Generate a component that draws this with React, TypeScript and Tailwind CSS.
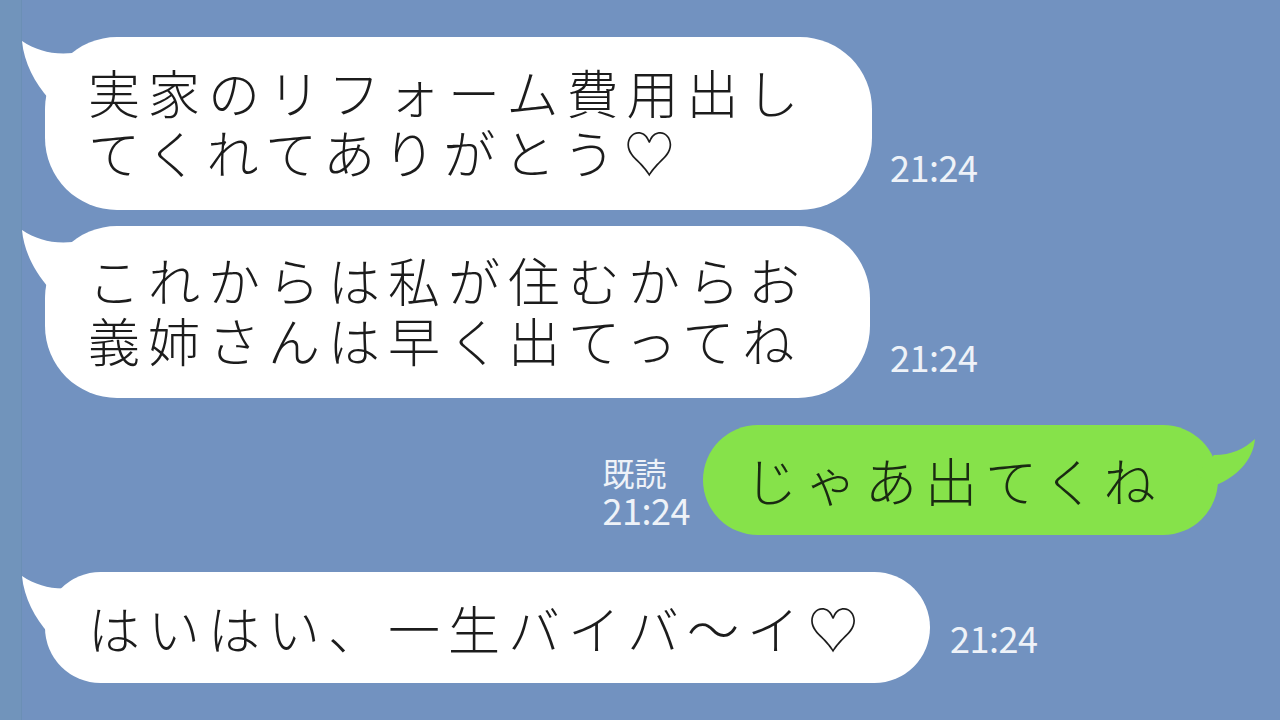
import React from 'react';

const jp = { fontFamily: '"Noto Sans CJK JP", "Noto Sans", sans-serif' };

function LeftTail() {
  return (
    <svg className="absolute left-[-24px] top-0" width="90" height="100" viewBox="0 0 90 100">
      <path d="M1 4 C 16 14, 32 18, 52 16 L 70 60 L 28 62 C 14 46, 3 26, 1 4 Z" fill="#ffffff" />
    </svg>
  );
}

function RightTail() {
  return (
    <svg className="absolute right-[-38px] top-0" width="100" height="100" viewBox="0 0 100 100">
      <path d="M99 14 C 88 24, 76 30, 58 30 L 40 50 L 60 60 C 80 52, 97 36, 99 14 Z" fill="#86e24a" />
    </svg>
  );
}

function Time({ children }: { children: React.ReactNode }) {
  return <div className="text-[36px] leading-[36px] text-[#eef2f8] tracking-[-0.5px]">{children}</div>;
}

export default function App() {
  return (
    <div className="w-[1280px] h-[720px] overflow-hidden bg-[#7292c0] flex" style={jp}>
      <div className="w-[22px] shrink-0 bg-[#7194bb] border-r border-[#6b8fb5]" />
      <div className="flex-1 flex flex-col pt-[37px]">
        {/* message 1 */}
        <div className="flex items-end">
          <div className="relative ml-[23px] w-[827px] h-[173px] rounded-[72px] bg-white flex items-center pl-[43px] pb-[4px]">
            <LeftTail />
            <div className="relative text-[52px] leading-[60px] tracking-[8px] text-[#1c1c1c] font-light">
              実家のリフォーム費用出し<br />てくれてありがとう♡
            </div>
          </div>
          <div className="ml-[18px] mb-[26px]"><Time>21:24</Time></div>
        </div>
        {/* message 2 */}
        <div className="flex items-end mt-[16px]">
          <div className="relative ml-[23px] w-[825px] h-[172px] rounded-[72px] bg-white flex items-center pl-[43px] pb-[4px]">
            <LeftTail />
            <div className="relative text-[52px] leading-[60px] tracking-[8px] text-[#1c1c1c] font-light">
              これからは私が住むからお<br />義姉さんは早く出てってね
            </div>
          </div>
          <div className="ml-[20px] mb-[24px]"><Time>21:24</Time></div>
        </div>
        {/* my reply */}
        <div className="flex items-end justify-end mt-[27px] pr-[62px]">
          <div className="mr-[13px] mb-[8px] flex flex-col">
            <div className="text-[32px] leading-[38px] text-[#eef2f8]">既読</div>
            <Time>21:24</Time>
          </div>
          <div className="relative w-[515px] h-[110px] rounded-[55px] bg-[#86e24a] flex items-center pl-[42px]">
            <RightTail />
            <div className="relative text-[52px] leading-[60px] tracking-[8px] text-[#1a2a12] font-light">じゃあ出てくね</div>
          </div>
        </div>
        {/* message 4 */}
        <div className="flex items-end mt-[37px]">
          <div className="relative ml-[23px] w-[885px] h-[111px] rounded-[56px] bg-white flex items-center pl-[43px]">
            <LeftTail />
            <div className="relative text-[52px] leading-[60px] tracking-[8px] text-[#1c1c1c] font-light">はいはい、一生バイバ〜イ♡</div>
          </div>
          <div className="ml-[20px] mb-[28px]"><Time>21:24</Time></div>
        </div>
      </div>
    </div>
  );
}
